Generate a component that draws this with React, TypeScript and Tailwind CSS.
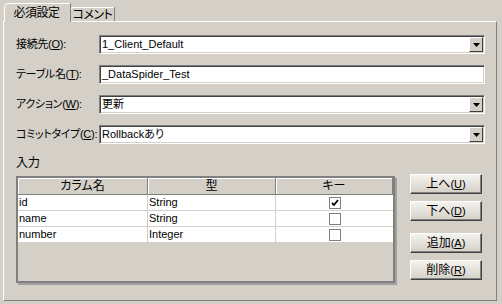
const FONT = 'font-["Liberation_Sans","Noto_Sans_CJK_JP",sans-serif] [font-feature-settings:"palt"]'

const fields = [
  { label: '接続先', key: 'O', value: '1_Client_Default', combo: true },
  { label: 'テーブル名', key: 'T', value: '_DataSpider_Test', combo: false },
  { label: 'アクション', key: 'W', value: '更新', combo: true },
  { label: 'コミットタイプ', key: 'C', value: 'Rollbackあり', combo: true },
]

const columns = [
  { name: 'id', type: 'String', key: true },
  { name: 'name', type: 'String', key: false },
  { name: 'number', type: 'Integer', key: false },
]

const buttons = [
  { label: '上へ', key: 'U', gap: false },
  { label: '下へ', key: 'D', gap: false },
  { label: '追加', key: 'A', gap: true },
  { label: '削除', key: 'R', gap: false },
]

function Accel({ k }: { k: string }) {
  return (
    <span className="text-[11px]">
      (<span className="underline underline-offset-1">{k}</span>)
    </span>
  )
}

function DropButton() {
  return (
    <div className="absolute right-[1px] top-[1px] flex h-[15px] w-[14px] items-center justify-center border border-t-white border-l-white border-r-[#404040] border-b-[#404040] bg-[#d4d0c8]">
      <svg width="7" height="4" viewBox="0 0 7 4">
        <path d="M0 0h7L3.5 4z" fill="#000" />
      </svg>
    </div>
  )
}

function Field({ value, combo }: { value: string; combo: boolean }) {
  return (
    <div className="relative flex h-[19px] flex-1 items-center border border-t-[#808080] border-l-[#808080] border-r-white border-b-white bg-white pl-[2px] text-[11px] shadow-[inset_1px_1px_0_#404040,inset_-1px_-1px_0_#d4d0c8]">
      <span className="leading-none">{value}</span>
      {combo && <DropButton />}
    </div>
  )
}

function Checkbox({ checked }: { checked: boolean }) {
  return (
    <div className="flex h-[12px] w-[12px] items-center justify-center border border-[#808080] bg-white">
      {checked && (
        <svg width="8" height="8" viewBox="0 0 8 8">
          <path d="M1 4l2 2 4-5" stroke="#000" strokeWidth="1.8" fill="none" />
        </svg>
      )}
    </div>
  )
}

export default function App() {
  return (
    <div className={`${FONT} h-[304px] w-[502px] bg-[#d4d0c8] text-[12px] text-black`}>
      {/* Tabs */}
      <div className="flex h-[21px] items-end pl-[4px]">
        <div className="relative z-10 mb-[-1px] flex h-[19px] w-[66px] items-center justify-center rounded-tl-[5px] border-l border-t border-white bg-[#d4d0c8] pr-[2px] tracking-[-0.5px] shadow-[1px_0_0_#808080]">
          必須設定
        </div>
        <div className="flex h-[14px] w-[44px] items-center justify-center whitespace-nowrap rounded-tl-[4px] border-l border-t border-white pt-[1px] tracking-[-0.5px] shadow-[1px_0_0_#808080]">
          コメント
        </div>
      </div>

      {/* Panel */}
      <div className="ml-[3px] h-[280px] w-[494px] border border-t-white border-l-white border-r-[#808080] border-b-[#808080] pl-[12px] pr-[11px] pt-[13px]">
        <div className="flex flex-col gap-[11px]">
          {fields.map((f) => (
            <div key={f.key} className="flex items-center">
              <div className="w-[83px] shrink-0 whitespace-nowrap text-[11px] tracking-[-0.3px]">
                {f.label}
                <Accel k={f.key} />:
              </div>
              <Field value={f.value} combo={f.combo} />
            </div>
          ))}
        </div>

        <div className="mt-[12px] h-[15px] leading-[15px]">入力</div>

        <div className="mt-[3px] flex items-start">
          {/* Table */}
          <div className="mt-[2px] h-[107px] w-[379px] border-2 border-[#808080] bg-[#d4d0c8] shadow-[2px_2px_0_#a0a0a0]">
            <div className="grid grid-cols-[130px_128px_117px]">
              {['カラム名', '型', 'キー'].map((h) => (
                <div
                  key={h}
                  className="flex h-[17px] items-center justify-center border-r border-b border-r-[#808080] border-b-[#808080] shadow-[inset_1px_1px_0_#fff]"
                >
                  {h}
                </div>
              ))}
              {columns.map((c) => (
                <div key={c.name} className="contents">
                  <div className="flex h-[16px] items-center border-r border-b border-[#d4d0c8] bg-white pl-[1px] text-[11px]">
                    {c.name}
                  </div>
                  <div className="flex h-[16px] items-center border-r border-b border-[#d4d0c8] bg-white pl-[1px] text-[11px]">
                    {c.type}
                  </div>
                  <div className="flex h-[16px] items-center justify-center border-b border-[#d4d0c8] bg-white">
                    <Checkbox checked={c.key} />
                  </div>
                </div>
              ))}
            </div>
          </div>

          {/* Buttons */}
          <div className="ml-[15px] flex w-[72px] flex-col">
            {buttons.map((b, i) => (
              <button
                key={b.key}
                className={`${i === 0 ? '' : b.gap ? 'mt-[12px]' : 'mt-[7px]'} flex h-[20px] w-[72px] items-center justify-center border border-t-white border-l-white border-r-[#404040] border-b-[#404040] bg-gradient-to-b from-[#f4f3ee] to-[#d4d0c8] shadow-[inset_-1px_-1px_0_#808080]`}
              >
                {b.label}
                <Accel k={b.key} />
              </button>
            ))}
          </div>
        </div>
      </div>
    </div>
  )
}
